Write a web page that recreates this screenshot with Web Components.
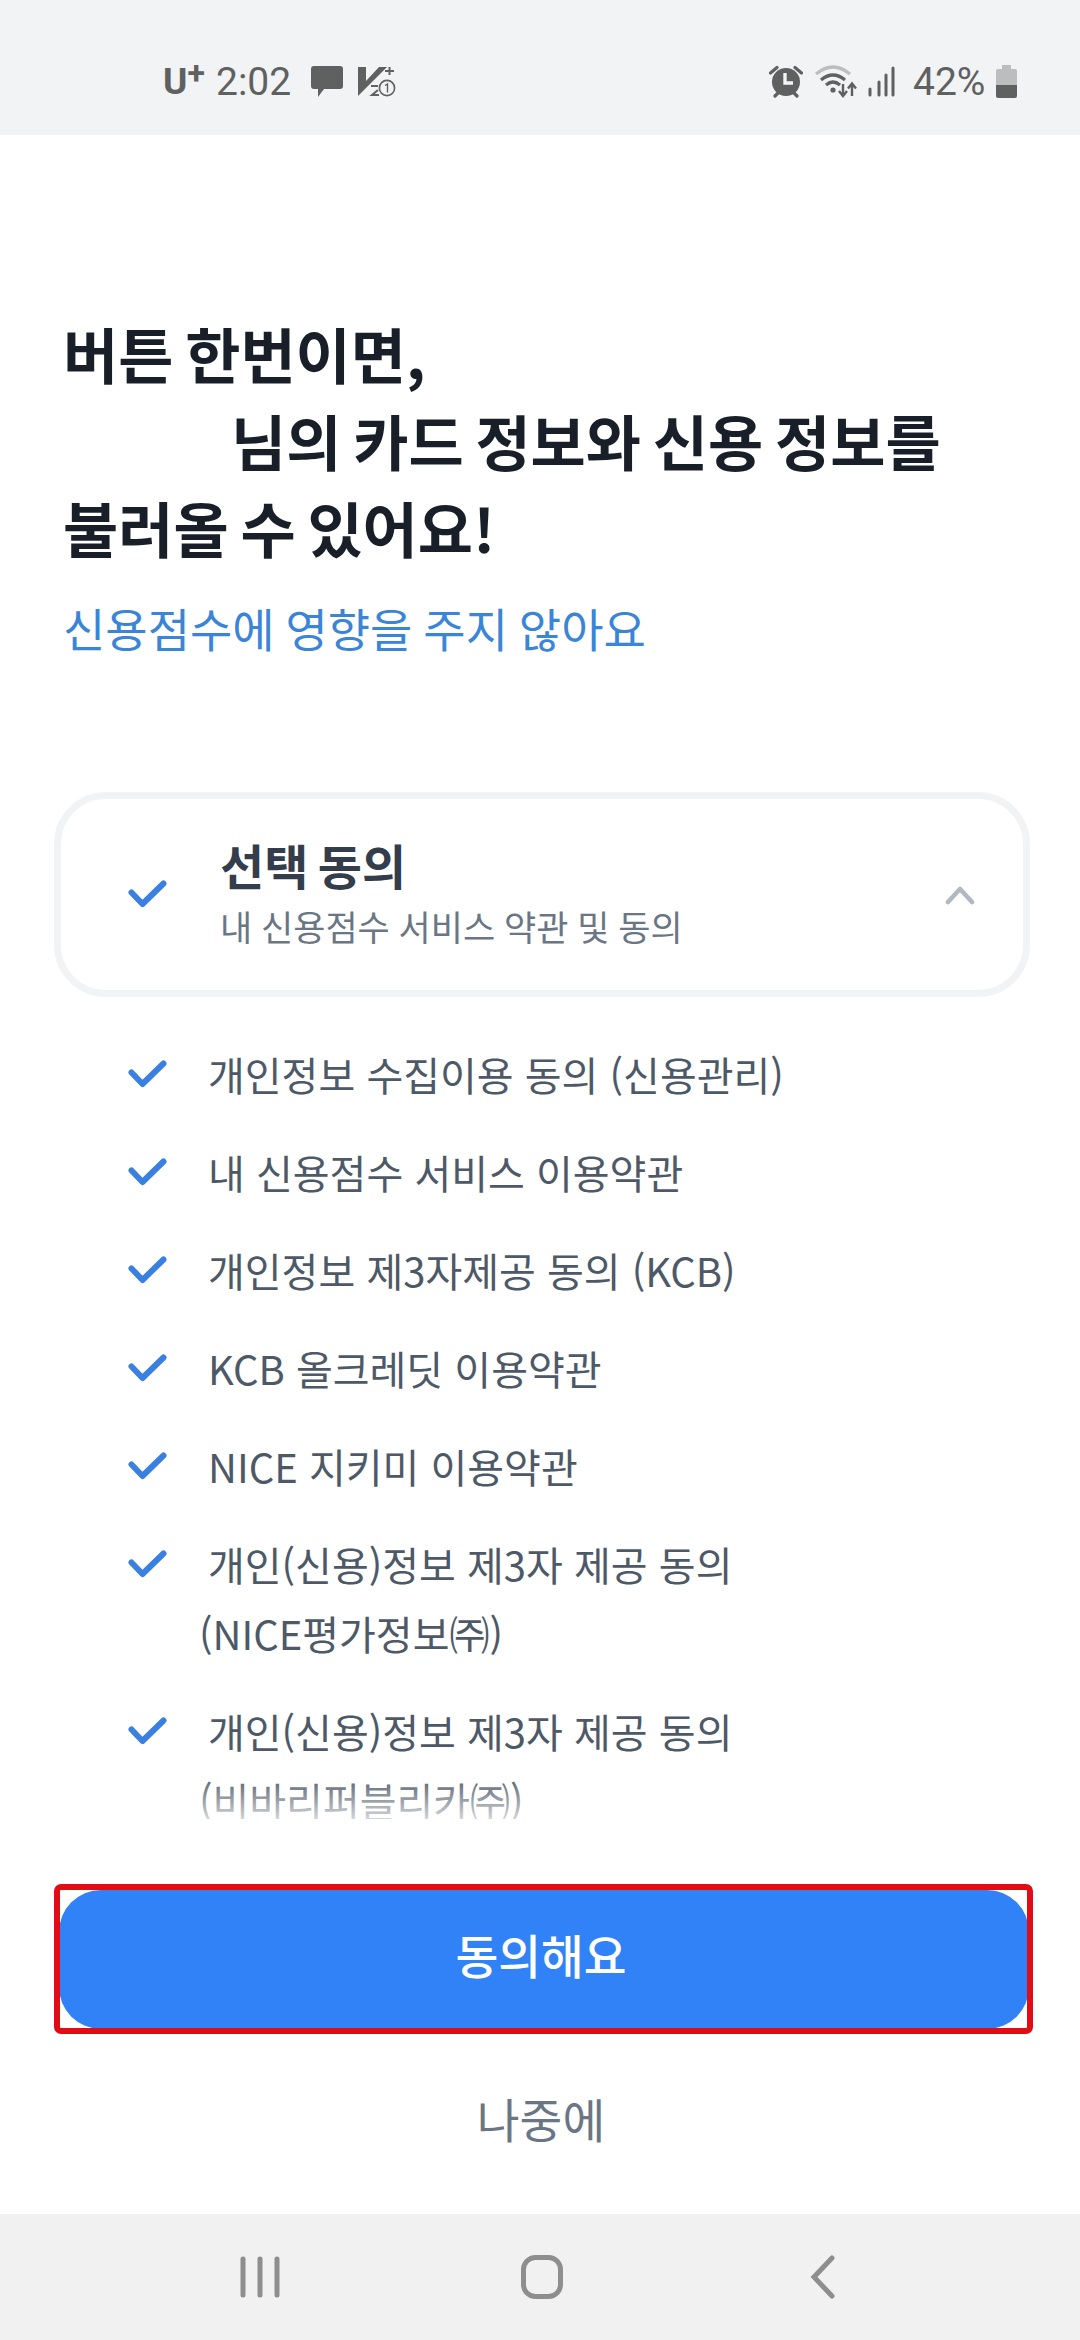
<!DOCTYPE html>
<html lang="ko">
<head>
<meta charset="utf-8">
<title>동의</title>
<style>
    html, body { margin: 0; background: #fff; }
    body { font-family: "Noto Sans CJK KR", "Noto Sans", sans-serif; }
</style>
</head>
<body>
<consent-screen>
    <status-bar slot="status"></status-bar>

    <hero-title slot="hero" sub="신용점수에 영향을 주지 않아요">
        버튼 한번이면,<br><span style="display:inline-block;width:168px"></span>님의 카드 정보와 신용 정보를<br>불러올 수 있어요!
    </hero-title>

    <agree-card slot="card" heading="선택 동의" sub="내 신용점수 서비스 약관 및 동의"></agree-card>

    <agree-item>개인정보 수집이용 동의 (신용관리)</agree-item>
    <agree-item>내 신용점수 서비스 이용약관</agree-item>
    <agree-item>개인정보 제3자제공 동의 (KCB)</agree-item>
    <agree-item>KCB 올크레딧 이용약관</agree-item>
    <agree-item>NICE 지키미 이용약관</agree-item>
    <agree-item>개인(신용)정보 제3자 제공 동의<br>(NICE평가정보㈜)</agree-item>
    <agree-item>개인(신용)정보 제3자 제공 동의<br>(비바리퍼블리카㈜)</agree-item>

    <primary-button slot="action" marked>동의해요</primary-button>
    <text-button slot="action">나중에</text-button>

    <nav-bar slot="nav"></nav-bar>
</consent-screen>

<script>
const KR = `"Noto Sans CJK KR", "Noto Sans", sans-serif`

const checkIcon = /*html*/`
<svg width="39" height="29" viewBox="0 0 39 29" fill="none">
    <path d="M3.5 12.5 L14.5 24 L35.5 3.5" stroke="#3a80e0" stroke-width="6" stroke-linecap="round" stroke-linejoin="round"/>
</svg>`

class ShadowBase extends HTMLElement {
    constructor() {
        super()
        this.attachShadow({ mode: "open" })
    }
    connectedCallback() {
        this.shadowRoot.innerHTML = this.render()
    }
}

class ConsentScreen extends ShadowBase {
    render() {
        return /*html*/`
        <style>
            :host { display: flex; flex-direction: column; width: 1080px; height: 2340px; background: #fff; overflow: hidden; }
            main { flex: 1; display: flex; flex-direction: column; min-height: 0; }
            .hero { display: block; padding: 174px 63px 0; }
            .card { display: block; padding: 135px 50px 0 54px; }
            .list-wrap { position: relative; margin-top: 43px; height: 779px; overflow: hidden; }
            .list { display: flex; flex-direction: column; gap: 29px; }
            .fade { position: absolute; left: 0; right: 0; bottom: 0; height: 44px;
                background: linear-gradient(rgba(255,255,255,0), rgba(255,255,255,.75)); }
            .action { display: flex; flex-direction: column; align-items: center; margin-top: 71px; padding-left: 8px; }
        </style>
        <slot name="status"></slot>
        <main>
            <div class="hero"><slot name="hero"></slot></div>
            <div class="card"><slot name="card"></slot></div>
            <div class="list-wrap">
                <div class="list"><slot></slot></div>
                <div class="fade"></div>
            </div>
            <div class="action"><slot name="action"></slot></div>
        </main>
        <slot name="nav"></slot>`
    }
}

class StatusBar extends ShadowBase {
    render() {
        return /*html*/`
        <style>
            :host { display: flex; align-items: center; justify-content: space-between; height: 135px; padding: 28px 63px 0 163px;
                background: #f2f3f5; color: #5f6161; font-family: Roboto, sans-serif; box-sizing: border-box; }
            .group { display: flex; align-items: center; height: 40px; }
            .carrier { font-size: 37px; font-weight: 700; width: 53px; line-height: 40px; }
            .carrier sup { font-size: 32px; line-height: 0; position: relative; vertical-align: 10px; margin-left: 0; }
            .time { font-size: 39px; line-height: 40px; width: 84px; }
            .pct { font-size: 39px; line-height: 40px; width: 71px; }
            svg { display: block; flex: none; }
        </style>
        <div class="group">
            <span class="carrier">U<sup>+</sup></span>
            <span class="time">2:02</span>
            <svg style="margin-left:10px" width="33" height="34" viewBox="0 0 33 34"><path d="M4 1 H30 a3 3 0 0 1 3 3 V21 a3 3 0 0 1 -3 3 H14 L8 32 V24 H4 a3 3 0 0 1 -3 -3 V4 a3 3 0 0 1 3 -3 Z" fill="#5f6161"/></svg>
            <svg style="margin-left:15px" width="40" height="36" viewBox="0 0 40 36">
                <path d="M0 3 H8 V17 L21 3 H29 L0 32 Z" fill="#5f6161"/>
                <path d="M27 7 H36 M31.5 3 V11" stroke="#5f6161" stroke-width="2" fill="none"/>
                <path d="M13 22 H20 M20 26 L14 31 H21" stroke="#5f6161" stroke-width="2" fill="none"/>
                <circle cx="29" cy="24" r="7.6" fill="#f2f3f5" stroke="#5f6161" stroke-width="1.6"/>
                <path d="M27 21.5 L29.5 20 V28.5" stroke="#5f6161" stroke-width="1.4" fill="none"/>
            </svg>
        </div>
        <div class="group">
            <svg width="34" height="33" viewBox="0 0 34 33">
                <circle cx="17" cy="17" r="14" fill="#5f6161"/>
                <path d="M16 8 V18 H24" stroke="#f2f3f5" stroke-width="3.4" fill="none"/>
                <path d="M1.5 8 L8 2.5 M32.5 8 L26 2.5 M6 31 L9 28 M28 31 L25 28" stroke="#5f6161" stroke-width="3.2" stroke-linecap="round"/>
            </svg>
            <svg style="margin-left:12px" width="42" height="34" viewBox="0 0 42 34" fill="none">
                <path d="M1 9 Q18 -5 35 9" stroke="#bcbdbd" stroke-width="3.2"/>
                <path d="M6 15 Q18 5 30 15" stroke="#5f6161" stroke-width="3.2"/>
                <path d="M11 20 Q18 14 25 20" stroke="#5f6161" stroke-width="3.2"/>
                <circle cx="18" cy="25" r="2.6" fill="#5f6161"/>
                <path d="M28 19 V29 M24 26 L28 31 L32 26" stroke="#5f6161" stroke-width="2.4"/>
                <path d="M37 31 V20 M33 23.5 L37 18.5 L41 23.5" stroke="#5f6161" stroke-width="2.4"/>
            </svg>
            <svg style="margin-left:11px" width="27" height="31" viewBox="0 0 27 31" fill="none" stroke="#5f6161" stroke-width="3" stroke-linecap="round">
                <path d="M2 23 V29 M11 16 V29 M18 9 V29 M25 2 V29"/>
            </svg>
            <span class="pct" style="margin-left:18px">42%</span>
            <svg style="margin-left:12px" width="21" height="33" viewBox="0 0 21 33">
                <path d="M6 0 H15 V4 H19 a2 2 0 0 1 2 2 V20 H0 V6 a2 2 0 0 1 2 -2 H6 Z" fill="#bcbdbd"/>
                <path d="M0 20 H21 V31 a2 2 0 0 1 -2 2 H2 a2 2 0 0 1 -2 -2 Z" fill="#5f6161"/>
            </svg>
        </div>`
    }
}

class HeroTitle extends ShadowBase {
    render() {
        return /*html*/`
        <style>
            :host { display: block; font-family: ${KR}; }
            h1 { margin: 0; font-size: 60px; font-weight: 700; line-height: 87px; word-spacing: -5px; color: #191f28; }
            p { margin: 27px 0 0; font-size: 46px; line-height: 60px; font-weight: 400; word-spacing: -2px; color: #3a85d8; }
        </style>
        <h1><slot></slot></h1>
        <p>${this.getAttribute("sub")}</p>`
    }
}

class AgreeCard extends ShadowBase {
    render() {
        return /*html*/`
        <style>
            :host { display: block; font-family: ${KR}; }
            .card { display: flex; align-items: center; box-sizing: border-box; height: 205px; border: 7px solid #f2f3f5; border-radius: 52px; padding-left: 67px; padding-right: 48px; }
            .text { flex: 1; margin-left: 53px; margin-top: -6px; }
            .head { font-size: 48px; line-height: 62px; font-weight: 700; word-spacing: -4px; color: #333d4b; }
            .sub { font-size: 35px; line-height: 50px; font-weight: 400; word-spacing: -1px; color: #6b7684; margin-top: 6px; }
            svg { display: block; flex: none; }
        </style>
        <div class="card">
            ${checkIcon}
            <div class="text">
                <div class="head">${this.getAttribute("heading")}</div>
                <div class="sub">${this.getAttribute("sub")}</div>
            </div>
            <svg width="30" height="20" viewBox="0 0 30 20" fill="none">
                <path d="M3 17 L15 4 L27 17" stroke="#b0b8c1" stroke-width="4.5" stroke-linecap="round" stroke-linejoin="round"/>
            </svg>
        </div>`
    }
}

class AgreeItem extends ShadowBase {
    render() {
        return /*html*/`
        <style>
            :host { display: flex; align-items: flex-start; padding-left: 128px; font-family: ${KR}; }
            svg { display: block; flex: none; margin-top: 20px; }
            .text { margin-left: 32px; text-indent: 9px; font-size: 40px; line-height: 69px; font-weight: 400; color: #4e5968; }
        </style>
        ${checkIcon}
        <div class="text"><slot></slot></div>`
    }
}

class PrimaryButton extends ShadowBase {
    render() {
        return /*html*/`
        <style>
            :host { display: block; position: relative; width: 970px; font-family: ${KR}; }
            button { display: block; width: 100%; height: 139px; border: 0; border-radius: 42px; background: #3182f6; color: #fff;
                font-family: inherit; font-size: 46.5px; font-weight: 500; padding: 0 6px 12px 0; }
            .mark { position: absolute; inset: -6px -4px -5px -5px; border: 6px solid #e00d14; border-radius: 7px; pointer-events: none; }
        </style>
        <button><slot></slot></button>
        ${this.hasAttribute("marked") ? `<div class="mark"></div>` : ""}`
    }
}

class TextButton extends ShadowBase {
    render() {
        return /*html*/`
        <style>
            :host { display: block; margin-top: 55px; margin-left: -6px; font-family: ${KR}; font-size: 46.5px; line-height: 68px; color: #6b7684; }
        </style>
        <slot></slot>`
    }
}

class NavBar extends ShadowBase {
    render() {
        return /*html*/`
        <style>
            :host { display: flex; align-items: center; height: 126px; background: #f1f1f1; box-sizing: border-box; padding-left: 240px; flex: none; }
            svg { display: block; flex: none; }
        </style>
        <svg width="40" height="42" viewBox="0 0 40 42" stroke="#8e8e8e" stroke-width="5" stroke-linecap="round">
            <path d="M3 3 V39 M20 3 V39 M37 3 V39"/>
        </svg>
        <svg style="margin-left:241px" width="42" height="44" viewBox="0 0 42 44" fill="none">
            <rect x="2.5" y="2.5" width="37" height="39" rx="12" stroke="#8e8e8e" stroke-width="5"/>
        </svg>
        <svg style="margin-left:246px" width="26" height="44" viewBox="0 0 26 44" fill="none">
            <path d="M23 3 L5 22 L23 41" stroke="#8e8e8e" stroke-width="5" stroke-linecap="round"/>
        </svg>`
    }
}

customElements.define("consent-screen", ConsentScreen)
customElements.define("status-bar", StatusBar)
customElements.define("hero-title", HeroTitle)
customElements.define("agree-card", AgreeCard)
customElements.define("agree-item", AgreeItem)
customElements.define("primary-button", PrimaryButton)
customElements.define("text-button", TextButton)
customElements.define("nav-bar", NavBar)
</script>
</body>
</html>
